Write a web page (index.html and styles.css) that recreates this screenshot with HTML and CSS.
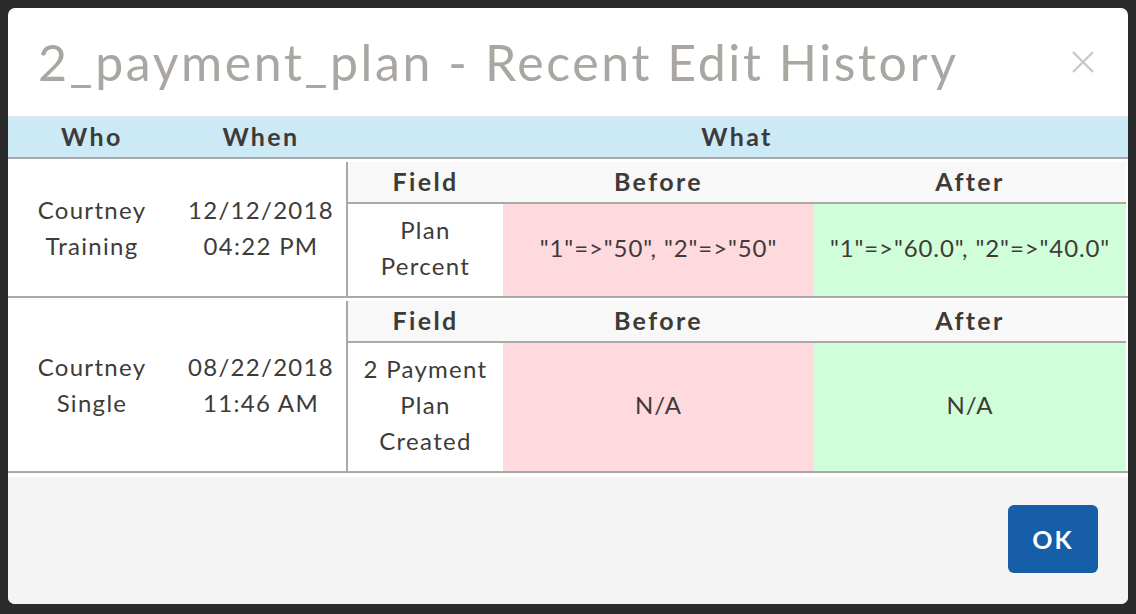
FILE: index.html
```html
<!DOCTYPE html>
<html lang="en">
<head>
<meta charset="utf-8">
<title>Recent Edit History</title>
<link rel="stylesheet" href="styles.css">
</head>
<body>
<div class="modal">
  <div class="modal-header">
    <h1 class="title">2_payment_plan - Recent Edit History</h1>
    <button class="close" aria-label="Close">
      <svg width="22" height="22" viewBox="0 0 22 22"><path d="M1 1 L21 21 M21 1 L1 21" stroke="#c9c9c9" stroke-width="2.4" fill="none"/></svg>
    </button>
  </div>
  <div class="history">
    <div class="head-row">
      <div class="head-cell">Who</div>
      <div class="head-cell">When</div>
      <div class="head-cell">What</div>
    </div>
    <div class="entry">
      <div class="who">Courtney<br>Training</div>
      <div class="when">12/12/2018<br>04:22 PM</div>
      <div class="what">
        <div class="changes">
          <div class="sub-head">Field</div>
          <div class="sub-head">Before</div>
          <div class="sub-head">After</div>
          <div class="field">Plan<br>Percent</div>
          <div class="before">"1"=&gt;"50", "2"=&gt;"50"</div>
          <div class="after">"1"=&gt;"60.0", "2"=&gt;"40.0"</div>
        </div>
      </div>
    </div>
    <div class="entry">
      <div class="who">Courtney<br>Single</div>
      <div class="when">08/22/2018<br>11:46 AM</div>
      <div class="what">
        <div class="changes">
          <div class="sub-head">Field</div>
          <div class="sub-head">Before</div>
          <div class="sub-head">After</div>
          <div class="field">2 Payment<br>Plan<br>Created</div>
          <div class="before">N/A</div>
          <div class="after">N/A</div>
        </div>
      </div>
    </div>
  </div>
  <div class="modal-footer">
    <button class="ok">OK</button>
  </div>
</div>
</body>
</html>
```
FILE: styles.css
```css
html, body {
  margin: 0;
  padding: 0;
}
body {
  background: #2b2b2b;
  padding: 8px;
  font-family: Lato, "Open Sans", sans-serif;
  color: #3e3b39;
}
.modal {
  width: 1120px;
  background: #ffffff;
  border-radius: 7px;
  overflow: hidden;
}
.modal-header {
  height: 108px;
  display: flex;
  align-items: center;
  justify-content: space-between;
  padding: 0 34px 0 30px;
  box-sizing: border-box;
}
.title {
  margin: 0;
  font-size: 50px;
  font-weight: 400;
  letter-spacing: 2.6px;
  color: #aaa6a1;
  line-height: 1;
}
.close {
  background: none;
  border: 0;
  padding: 0;
  width: 22px;
  height: 22px;
  display: block;
  margin-top: 0;
}
.close svg { display: block; }
.history {
  border-top: 1px solid #e6e6e6;
  padding-bottom: 3px;
}
.head-row {
  display: grid;
  grid-template-columns: 168px 170px 1fr;
  height: 40px;
  background: #cce9f6;
  border-bottom: 2px solid #a9a9a9;
}
.head-cell {
  display: flex;
  align-items: center;
  justify-content: center;
  font-size: 25px;
  font-weight: 700;
  letter-spacing: 2.4px;
  color: #3d3a37;
  padding-bottom: 2px;
}
.entry {
  display: grid;
  grid-template-columns: 168px 170px 1fr;
  border-bottom: 2px solid #a9a9a9;
}
.who, .when {
  align-self: center;
  text-align: center;
  font-size: 24px;
  line-height: 36px;
  letter-spacing: 1.3px;
}
.what {
  padding: 3px 2px 0 0;
}
.changes {
  display: grid;
  grid-template-columns: 155px 311px 1fr;
  border-left: 2px solid #a9a9a9;
}
.sub-head {
  height: 42px;
  background: #f8f8f8;
  border-bottom: 2px solid #a9a9a9;
  display: flex;
  align-items: center;
  justify-content: center;
  font-size: 25px;
  font-weight: 700;
  letter-spacing: 2.4px;
  color: #3d3a37;
  padding-bottom: 3px;
  box-sizing: border-box;
}
.field, .before, .after {
  display: flex;
  align-items: center;
  justify-content: center;
  text-align: center;
  font-size: 24px;
  line-height: 36px;
  letter-spacing: 0.9px;
  padding: 8px 0 12px;
}
.field { letter-spacing: 1.3px; }
.before { background: #fed9de; }
.after { background: #cffed8; }
.modal-footer {
  background: #f4f4f4;
  border-top: 1px solid #ffffff;
  display: flex;
  justify-content: flex-end;
  padding: 28px 30px 31px 0;
}
.ok {
  width: 90px;
  height: 68px;
  background: #165ea8;
  border: 0;
  border-radius: 6px;
  color: #ffffff;
  font-family: Lato, sans-serif;
  font-size: 25px;
  font-weight: 700;
  letter-spacing: 2px;
  padding: 0;
}
```
